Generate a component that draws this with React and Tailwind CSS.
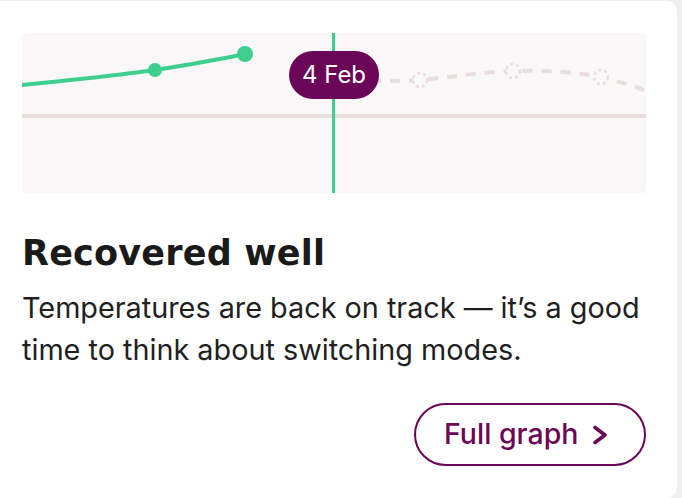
import React from 'react';

export default function App() {
    return (
        <div className="min-h-screen bg-[#f0eeee] pt-px pr-[5px]" style={{ fontFamily: 'Inter, "Noto Sans", sans-serif' }}>
            <div className="h-[497px] w-[677px] rounded-tr-[10px] rounded-br-[10px] bg-white pl-[22px] pr-[31px] pt-[32px]">
                {/* Chart */}
                <div className="relative h-[160px] rounded-[4px] bg-[#f9f7f8]">
                    <svg width="624" height="160" viewBox="0 0 624 160" className="block">
                        <rect x="0" y="81" width="624" height="4" fill="#e9dddd" />
                        {/* forecast */}
                        <path
                            d="M311 49 C 340 49, 370 48, 398 47 C 430 44, 460 39, 491 38 C 520 37, 555 39, 579 44 C 595 48, 610 52, 624 58"
                            fill="none"
                            stroke="#e9dddd"
                            strokeWidth="4"
                            strokeDasharray="10 9"
                        />
                        {[[398, 47], [491, 38], [579, 44]].map(([cx, cy], i) => (
                            <circle key={i} cx={cx} cy={cy} r="7" fill="#f9f7f8" stroke="#e9dddd" strokeWidth="2.5" strokeDasharray="3 3" />
                        ))}
                        {/* history */}
                        <path d="M0 52 C 50 47, 100 42, 133 37 C 165 32, 195 27, 223 21" fill="none" stroke="#3ecf8e" strokeWidth="4" strokeLinecap="round" />
                        <circle cx="133" cy="37" r="7" fill="#3ecf8e" />
                        <circle cx="223" cy="21" r="8" fill="#3ecf8e" />
                        <rect x="310" y="0" width="3" height="160" fill="#3ecf8e" />
                    </svg>
                    <div className="absolute left-[267px] top-[18px] flex h-[48px] w-[90px] items-center justify-center rounded-full bg-[#6b0557] text-[24px] text-white">
                        4 Feb
                    </div>
                </div>

                {/* Text */}
                <h2
                    className="mt-[40px] text-[35px] font-bold leading-[40px] tracking-[0.2px] text-[#1a1a1a]"
                    style={{ fontFamily: '"DejaVu Sans", Inter, sans-serif' }}
                >
                    Recovered well
                </h2>
                <p className="mt-[14px] text-[28.8px] leading-[42px] text-[#1f1f1f]">
                    Temperatures are back on track — it’s a good time to think about switching modes.
                </p>

                <div className="mt-[32px] flex justify-end">
                    <button className="flex h-[63px] w-[232px] items-center rounded-full border-2 border-[#6b0557] pl-[28px] text-[28.5px] font-medium text-[#6b0557]">
                        Full graph
                        <svg width="16" height="20" viewBox="0 0 16 20" className="ml-[14px]">
                            <path d="M3 2.5 L13 10 L3 17.5" fill="none" stroke="currentColor" strokeWidth="3.6" strokeLinecap="round" strokeLinejoin="round" />
                        </svg>
                    </button>
                </div>
            </div>
        </div>
    );
}
